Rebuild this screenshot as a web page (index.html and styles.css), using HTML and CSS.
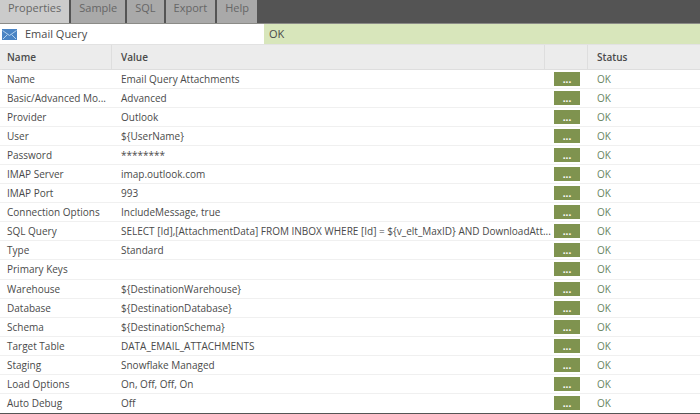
FILE: index.html
```
<!DOCTYPE html>
<html lang="en">
<head>
<meta charset="utf-8">
<title>Email Query</title>
<link rel="stylesheet" href="styles.css">
</head>
<body>
<div class="panel">
  <nav class="tabs" role="tablist">
    <button class="tab active" role="tab" aria-selected="true">Properties</button>
    <button class="tab" role="tab">Sample</button>
    <button class="tab" role="tab">SQL</button>
    <button class="tab" role="tab">Export</button>
    <button class="tab" role="tab">Help</button>
  </nav>
  <header class="component">
    <div class="component-name">
      <svg class="mail" viewBox="0 0 15 11" aria-hidden="true">
        <rect width="15" height="11" fill="#4a84c4"/>
        <path d="M0.500 1.500L7.500 6.500L14.500 1.500M1 10L5.500 5.500M14 10L9.500 5.500" fill="none" stroke="#b4d2ee" stroke-width="1"/>
      </svg>
      <span>Email Query</span>
    </div>
    <div class="component-status">OK</div>
  </header>
  <table class="properties">
    <colgroup><col class="col-name"><col class="col-value"><col class="col-edit"><col class="col-status"></colgroup>
    <thead>
      <tr><th scope="col">Name</th><th scope="col">Value</th><th></th><th scope="col">Status</th></tr>
    </thead>
    <tbody>
      <tr><td>Name</td><td>Email Query Attachments</td><td><button class="edit">...</button></td><td>OK</td></tr>
      <tr><td>Basic/Advanced Mo...</td><td>Advanced</td><td><button class="edit">...</button></td><td>OK</td></tr>
      <tr><td>Provider</td><td>Outlook</td><td><button class="edit">...</button></td><td>OK</td></tr>
      <tr><td>User</td><td>${UserName}</td><td><button class="edit">...</button></td><td>OK</td></tr>
      <tr><td>Password</td><td>********</td><td><button class="edit">...</button></td><td>OK</td></tr>
      <tr><td>IMAP Server</td><td>imap.outlook.com</td><td><button class="edit">...</button></td><td>OK</td></tr>
      <tr><td>IMAP Port</td><td>993</td><td><button class="edit">...</button></td><td>OK</td></tr>
      <tr><td>Connection Options</td><td>IncludeMessage, true</td><td><button class="edit">...</button></td><td>OK</td></tr>
      <tr><td>SQL Query</td><td>SELECT [Id],[AttachmentData] FROM INBOX WHERE [Id] = ${v_elt_MaxID} AND DownloadAtt...</td><td><button class="edit">...</button></td><td>OK</td></tr>
      <tr><td>Type</td><td>Standard</td><td><button class="edit">...</button></td><td>OK</td></tr>
      <tr><td>Primary Keys</td><td></td><td><button class="edit">...</button></td><td>OK</td></tr>
      <tr><td>Warehouse</td><td>${DestinationWarehouse}</td><td><button class="edit">...</button></td><td>OK</td></tr>
      <tr><td>Database</td><td>${DestinationDatabase}</td><td><button class="edit">...</button></td><td>OK</td></tr>
      <tr><td>Schema</td><td>${DestinationSchema}</td><td><button class="edit">...</button></td><td>OK</td></tr>
      <tr><td>Target Table</td><td>DATA_EMAIL_ATTACHMENTS</td><td><button class="edit">...</button></td><td>OK</td></tr>
      <tr><td>Staging</td><td>Snowflake Managed</td><td><button class="edit">...</button></td><td>OK</td></tr>
      <tr><td>Load Options</td><td>On, Off, Off, On</td><td><button class="edit">...</button></td><td>OK</td></tr>
      <tr><td>Auto Debug</td><td>Off</td><td><button class="edit">...</button></td><td>OK</td></tr>
    </tbody>
  </table>
</div>
</body>
</html>
```
FILE: styles.css
```
* {
  box-sizing: border-box;
}

body {
  margin: 0;
  background: #fff;
  color: #4a4a4a;
  font-family: "Open Sans", "Noto Sans", sans-serif;
  font-size: 10px;
}

button {
  margin: 0;
  border: 0;
  font-family: inherit;
}

.panel {
  display: flex;
  flex-direction: column;
  border-bottom: 1px solid #555;
}

.tabs {
  display: flex;
  gap: 2px;
  height: 24px;
  background: #545454;
  border-bottom: 1px solid #8b8b87;
}

.tab {
  padding: 0 8px 7px;
  background: #a9a9a9;
  color: #666;
  font-size: 11px;
  line-height: 16px;
}

.tab.active {
  background: #cbcbcb;
}

.component {
  display: grid;
  grid-template-columns: 264px 1fr;
  height: 21px;
  border-bottom: 1px solid #e2e2e2;
  font-size: 11px;
  line-height: 20px;
}

.component-name {
  display: flex;
  align-items: center;
  gap: 8px;
  padding-left: 2px;
}

.mail {
  width: 15px;
  height: 11px;
}

.component-status {
  padding-left: 5px;
  background: #d8e6bb;
}

.properties {
  width: 100%;
  height: calc(100vh - 46px);
  table-layout: fixed;
  border-collapse: separate;
  border-spacing: 0;
}

.col-name {
  width: 112px;
}

.col-edit {
  width: 43px;
}

.col-status {
  width: 112px;
}

th {
  height: 25px;
  padding: 0 0 0 7px;
  background: #ececec;
  border-right: 1px solid #dedede;
  border-bottom: 1px solid #dedede;
  text-align: left;
  font-weight: 600;
}

th:last-child {
  border-right: 0;
}

td {
  height: 19px;
  padding: 0 0 0 7px;
  border-bottom: 1px solid #f0f0f0;
  line-height: 14px;
  white-space: nowrap;
}

tbody tr:last-child td {
  border-bottom: 0;
}

th:nth-child(n+2),
td:nth-child(n+2) {
  padding-left: 9px;
}

td:last-child {
  color: #68865f;
}

.edit {
  display: block;
  width: 26px;
  height: 14px;
  padding: 0;
  background: #7f934f;
  color: #fff;
  font-size: 10px;
  font-weight: 700;
  line-height: 14px;
}
```
